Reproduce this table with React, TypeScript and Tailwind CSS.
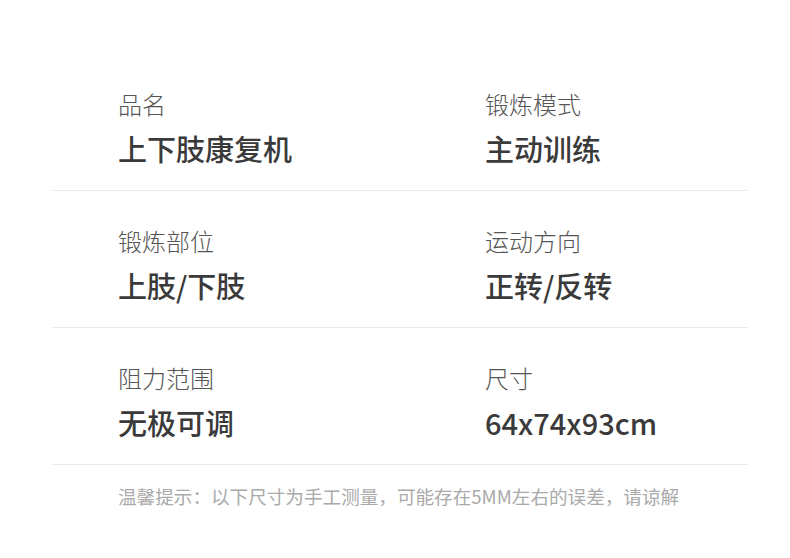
import React from "react";

const rows: [string, string, string, string][] = [
  ["品名", "上下肢康复机", "锻炼模式", "主动训练"],
  ["锻炼部位", "上肢/下肢", "运动方向", "正转/反转"],
  ["阻力范围", "无极可调", "尺寸", "64x74x93cm"],
];

function Cell({ label, value }: { label: string; value: string }) {
  return (
    <div className="flex flex-col">
      <div className="text-[24px] leading-[24px] font-light text-[#555555]">{label}</div>
      <div className="mt-[17px] text-[29px] leading-[30px] font-medium text-[#3a3a3a]">{value}</div>
    </div>
  );
}

export default function App() {
  return (
    <div
      className="w-[790px] h-[558px] bg-white overflow-hidden"
      style={{ fontFamily: '"Noto Sans CJK SC", "Noto Sans", sans-serif' }}
    >
      <div className="pt-[54px] mx-[53px] w-[695px]">
        {rows.map((r, i) => (
          <div key={i} className="border-b border-[#e8e8e8] h-[137px] pt-[38px] pl-[65px] grid grid-cols-[367px_1fr] items-start">
            <Cell label={r[0]} value={r[1]} />
            <Cell label={r[2]} value={r[3]} />
          </div>
        ))}
        <div className="pl-[65px] mt-[19px] text-[18.6px] leading-[24px] text-[#aaaaaa]">
          温馨提示：以下尺寸为手工测量，可能存在5MM左右的误差，请谅解
        </div>
      </div>
    </div>
  );
}
